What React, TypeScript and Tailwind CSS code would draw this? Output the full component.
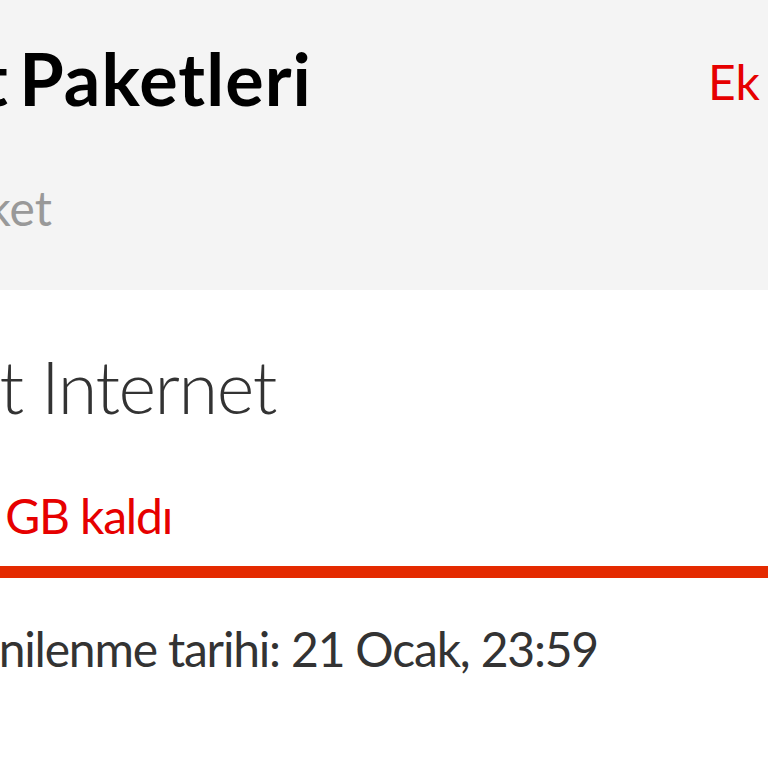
export default function App() {
  return (
    <div className="w-[768px] h-[768px] overflow-hidden bg-white" style={{ fontFamily: 'Lato, "Noto Sans", sans-serif' }}>
      <div className="bg-[#f4f4f4] h-[290px] pt-[28px]">
        <div className="flex justify-between items-start">
          <div className="w-[312px] flex justify-end">
            <h1 className="whitespace-nowrap text-[72px] leading-[100px] font-bold text-black [word-spacing:-6px]">
              İnternet <span className="tracking-[0.015em]">Paketleri</span>
            </h1>
          </div>
          <div className="w-[60px] whitespace-nowrap text-[48px] leading-[60px] mt-[24px] text-[#e60000]">Ek Paket</div>
        </div>
        <div className="w-[52px] flex justify-end mt-[50px]">
          <span className="whitespace-nowrap text-[48px] leading-[60px] text-[#999999]">1 Paket</span>
        </div>
      </div>
      <div className="pt-[46px]">
        <div className="w-[276px] flex justify-end">
          <span className="whitespace-nowrap text-[72px] leading-[100px] font-light tracking-[-0.02em] text-[#333333]">
            Boost Internet
          </span>
        </div>
        <div className="w-[172px] flex justify-end mt-[50px]">
          <span className="whitespace-nowrap text-[48px] leading-[60px] tracking-[-0.025em] text-[#e60000]">10 GB kaldı</span>
        </div>
        <div className="h-[12px] bg-[#e42a00] mt-[20px]" />
        <div className="w-[598px] flex justify-end mt-[41px]">
          <span className="whitespace-nowrap text-[48px] leading-[60px] tracking-[-0.025em] text-[#333333]">Yenilenme tarihi: 21 Ocak, 23:59</span>
        </div>
      </div>
    </div>
  );
}
